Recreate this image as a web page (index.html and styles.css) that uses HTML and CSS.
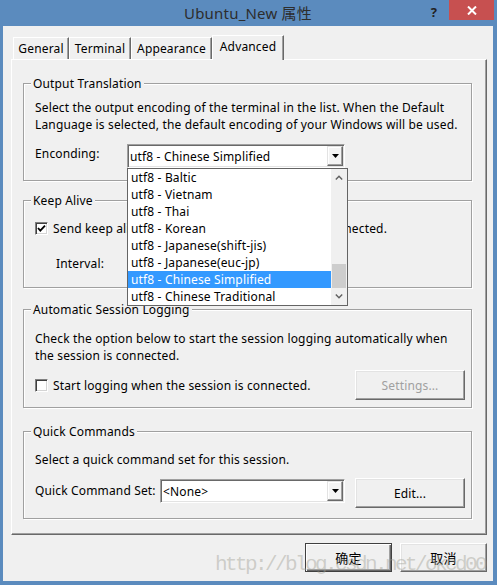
FILE: index.html
```html
<!DOCTYPE html>
<html>
<head>
<meta charset="utf-8">
<link rel="stylesheet" href="styles.css">
</head>
<body>
<div class="window">
  <div class="titlebar">
    <div class="title">Ubuntu_New 属性</div>
    <div class="help">?</div>
    <div class="close">
      <svg width="10" height="9" viewBox="0 0 10 9"><path d="M1 0.5 L9 8.5 M9 0.5 L1 8.5" stroke="#fff" stroke-width="2"/></svg>
    </div>
  </div>
  <div class="client">
    <div class="tabs">
      <div class="tab tab-general">General</div>
      <div class="tab tab-terminal">Terminal</div>
      <div class="tab tab-appearance">Appearance</div>
      <div class="tab tab-active">Advanced</div>
    </div>
    <div class="panel">
      <div class="group group-ot">
        <div class="group-title">Output Translation</div>
        <div class="group-body">
          <p class="desc desc-ot">Select the output encoding of the terminal in the list. When the Default<br>Language is selected, the default encoding of your Windows will be used.</p>
          <div class="row row-enc">
            <div class="label label-enc">Enconding:</div>
            <div class="combo combo-enc">
              <div class="combo-text">utf8 - Chinese Simplified</div>
              <div class="combo-btn"><svg width="7" height="4" viewBox="0 0 7 4"><polygon points="0,0 7,0 3.5,4" fill="#000"/></svg></div>
              <div class="dropdown">
                <div class="dd-items">
                  <div class="dd-item">utf8 - Baltic</div>
                  <div class="dd-item">utf8 - Vietnam</div>
                  <div class="dd-item">utf8 - Thai</div>
                  <div class="dd-item">utf8 - Korean</div>
                  <div class="dd-item">utf8 - Japanese(shift-jis)</div>
                  <div class="dd-item">utf8 - Japanese(euc-jp)</div>
                  <div class="dd-item dd-selected">utf8 - Chinese Simplified</div>
                  <div class="dd-item">utf8 - Chinese Traditional</div>
                </div>
                <div class="dd-scroll">
                  <div class="sb-btn"><svg width="8" height="5" viewBox="0 0 8 5"><polyline points="0.8,4.5 4,1.2 7.2,4.5" fill="none" stroke="#606060" stroke-width="1.4"/></svg></div>
                  <div class="sb-track"><div class="sb-thumb"></div></div>
                  <div class="sb-btn"><svg width="8" height="5" viewBox="0 0 8 5"><polyline points="0.8,0.5 4,3.8 7.2,0.5" fill="none" stroke="#606060" stroke-width="1.4"/></svg></div>
                </div>
              </div>
            </div>
          </div>
        </div>
      </div>

      <div class="group group-ka">
        <div class="group-title">Keep Alive</div>
        <div class="group-body">
          <div class="check-row check-ka">
            <div class="checkbox"><svg width="11" height="11" viewBox="0 0 11 11"><polyline points="2,5 4.3,7.6 9,2.6" fill="none" stroke="#000" stroke-width="1.8"/></svg></div>
            <span class="check-label">Send keep alive messages while this session is connected.</span>
          </div>
          <div class="row row-interval">
            <div class="label label-interval">Interval:</div>
          </div>
        </div>
      </div>

      <div class="group group-asl">
        <div class="group-title">Automatic Session Logging</div>
        <div class="group-body">
          <p class="desc desc-asl">Check the option below to start the session logging automatically when<br>the session is connected.</p>
          <div class="row row-log">
            <div class="checkbox"></div>
            <span class="check-label">Start logging when the session is connected.</span>
            <div class="button button-disabled button-side">Settings...</div>
          </div>
        </div>
      </div>

      <div class="group group-qc">
        <div class="group-title">Quick Commands</div>
        <div class="group-body">
          <p class="desc desc-qc">Select a quick command set for this session.</p>
          <div class="row row-qc">
            <div class="label label-qc">Quick Command Set:</div>
            <div class="combo combo-qc">
              <div class="combo-text">&lt;None&gt;</div>
              <div class="combo-btn"><svg width="7" height="4" viewBox="0 0 7 4"><polygon points="0,0 7,0 3.5,4" fill="#000"/></svg></div>
            </div>
            <div class="button button-side">Edit...</div>
          </div>
        </div>
      </div>
    </div>

    <div class="buttons">
      <div class="button button-default button-cjk">确定</div>
      <div class="button button-cjk">取消</div>
    </div>

    <div class="watermark">http://blog.csdn.net/okcd00</div>
  </div>
</div>
</body>
</html>
```

FILE: styles.css
```css
* { box-sizing: border-box; }

body {
  margin: 0;
  font-family: "Noto Sans", "Noto Sans CJK SC", sans-serif;
  font-size: 12px;
  letter-spacing: 0.15px;
  color: #000;
  background: #5b8bbe;
}

.window {
  width: 497px;
  height: 585px;
  background: #5b8bbe;
  display: flex;
  flex-direction: column;
}

.titlebar {
  height: 26px;
  display: flex;
  align-items: flex-start;
  padding: 0 3px 0 73px;
  flex-shrink: 0;
}

.title {
  flex: 1;
  text-align: center;
  font-size: 15px;
  letter-spacing: 0.2px;
  line-height: 27px;
  color: #2d2d2d;
}

.help {
  width: 26px;
  text-align: center;
  font-size: 13px;
  font-weight: bold;
  line-height: 24px;
  color: #222;
  padding-right: 4px;
}

.close {
  width: 45px;
  height: 20px;
  background: #c75050;
  display: flex;
  align-items: center;
  justify-content: center;
}

.client {
  flex: 1;
  margin: 0 4px 4px 3px;
  background: #f0f0f0;
  position: relative;
  display: flex;
  flex-direction: column;
  padding: 9px 6px 0 8px;
}

/* Tabs */
.tabs {
  display: flex;
  align-items: flex-end;
  height: 24px;
  padding-left: 2px;
  position: relative;
  z-index: 2;
}

.tab {
  height: 22px;
  border: 1px solid;
  border-color: #fff #696969 transparent #fff;
  border-bottom: none;
  box-shadow: inset -1px 0 #a0a0a0;
  text-align: center;
  line-height: 21px;
  background: #f0f0f0;
}

.tab-general { width: 56px; }
.tab-terminal { width: 62px; }
.tab-appearance { width: 81px; }
.tab-active {
  width: 72px;
  height: 25px;
  margin-bottom: -1px;
  line-height: 21px;
}

/* Panel */
.panel {
  width: 476px;
  height: 476px;
  border: 1px solid;
  border-color: #fff #696969 #696969 #fff;
  box-shadow: inset -1px -1px #a0a0a0;
  padding: 23px 0 0 11px;
  flex-shrink: 0;
}

.group {
  width: 449px;
  border: 1px solid #a0a0a0;
  box-shadow: 1px 1px 0 #fff, inset 1px 1px 0 #fff;
}

.group-ot { height: 98px; }
.group-ka { height: 88px; margin-top: 19px; }
.group-asl { height: 99px; margin-top: 21px; }
.group-qc { height: 88px; margin-top: 23px; }

.group-title {
  margin: -9px 0 0 7px;
  padding: 0 2px;
  width: fit-content;
  line-height: 17px;
  background: #f0f0f0;
  white-space: nowrap;
}

.group-body {
  padding: 0 6px 0 11px;
}

.desc {
  margin: 0;
  line-height: 17px;
  white-space: nowrap;
}

.desc-ot { margin-top: 7px; }
.desc-asl { margin-top: 12px; }
.desc-qc { margin-top: 11px; }

.row {
  display: flex;
  align-items: flex-start;
}

.label {
  line-height: 17px;
  white-space: nowrap;
}

.row-enc { margin-top: 11px; }
.label-enc { width: 92px; margin-top: 1px; }

/* Combo box */
.combo {
  position: relative;
  height: 24px;
  border: 1px solid;
  border-color: #a0a0a0 #fff #fff #a0a0a0;
  box-shadow: inset 1px 1px #696969, inset -1px -1px #e3e3e3;
  background: #fff;
  display: flex;
  align-items: center;
  padding: 0 1px 0 2px;
}

.combo-enc { width: 218px; }
.combo-qc { width: 185px; margin-top: 1px; }

.combo-text {
  flex: 1;
  line-height: 17px;
  padding-top: 1px;
  white-space: nowrap;
}

.combo-btn {
  width: 16px;
  height: 20px;
  background: #f4f4f4;
  border: 1px solid;
  border-color: #e3e3e3 #696969 #696969 #e3e3e3;
  box-shadow: inset -1px -1px #a0a0a0, inset 1px 1px #fff;
  display: flex;
  align-items: center;
  justify-content: center;
}

/* Dropdown list (open over the page) */
.dropdown {
  position: absolute;
  left: -1px;
  top: 23px;
  width: 221px;
  height: 138px;
  border: 1px solid #646464;
  background: #fff;
  display: flex;
  z-index: 10;
}

.dd-items {
  flex: 1;
}

.dd-item {
  height: 17px;
  line-height: 17px;
  padding-left: 3px;
  white-space: nowrap;
  overflow: hidden;
}

.dd-selected {
  background: #3399ff;
  color: #fff;
}

.dd-scroll {
  width: 16px;
  display: flex;
  flex-direction: column;
  background: #f0f0f0;
}

.sb-btn {
  height: 17px;
  display: flex;
  align-items: center;
  justify-content: center;
}

.sb-track {
  flex: 1;
  display: flex;
  flex-direction: column;
  justify-content: flex-end;
  padding: 0 1px;
}

.sb-thumb {
  height: 24px;
  background: #cdcdcd;
}

/* Checkboxes */
.check-row {
  display: flex;
  align-items: center;
  height: 17px;
}

.check-ka { margin-top: 11px; }

.checkbox {
  width: 13px;
  height: 13px;
  flex-shrink: 0;
  border: 1px solid;
  border-color: #808080 #fff #fff #808080;
  box-shadow: inset 1px 1px #404040, inset -1px -1px #d4d4d4;
  background: #fff;
  margin-right: 5px;
  display: flex;
  align-items: center;
  justify-content: center;
}

.check-label {
  white-space: nowrap;
  line-height: 17px;
}

.row-interval { margin-top: 18px; }
.label-interval { margin-left: 21px; }

.row-log {
  margin-top: 6px;
  align-items: center;
  height: 30px;
}

/* Buttons */
.button {
  height: 30px;
  border: 1px solid;
  border-color: #fff #696969 #696969 #fff;
  box-shadow: inset -1px -1px #a0a0a0, inset 1px 1px #e3e3e3;
  background: #f0f0f0;
  display: flex;
  align-items: center;
  justify-content: center;
  white-space: nowrap;
}

.button-side {
  width: 110px;
  margin-left: auto;
}

.button-disabled {
  color: #a0a0a0;
}

.row-qc { margin-top: 10px; }
.label-qc { width: 125px; margin-top: 4px; }

.buttons {
  display: flex;
  justify-content: flex-end;
  gap: 8px;
  margin-top: 8px;
}

.button-cjk {
  width: 87px;
  height: 29px;
  font-family: "Noto Sans CJK SC", sans-serif;
  font-size: 13px;
}

.button-default {
  border-color: #404040;
  box-shadow: inset 1px 1px #fff, inset -1px -1px #696969, inset -2px -2px #a0a0a0;
}

.watermark {
  position: absolute;
  left: 212px;
  top: 529px;
  font-family: "Liberation Mono", monospace;
  font-size: 21px;
  letter-spacing: -2.6px;
  line-height: 20px;
  color: rgba(160, 160, 150, 0.45);
  white-space: nowrap;
  z-index: 20;
}
```
